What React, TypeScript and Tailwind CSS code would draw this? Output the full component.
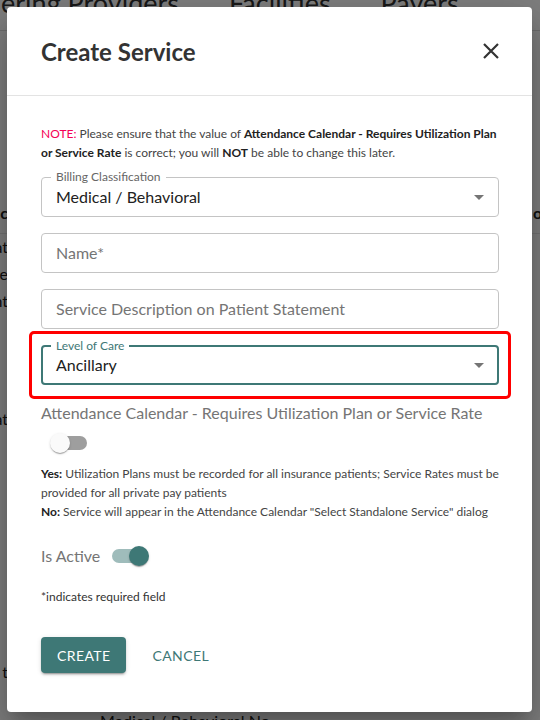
import { ReactNode } from 'react'

function Switch({ on }: { on?: boolean }) {
  return (
    <span className="relative inline-block w-[58px] h-[38px] shrink-0">
      <span
        className={
          on
            ? 'block m-[12px] w-[34px] h-[14px] rounded-full bg-[#9fbcbb]'
            : 'block m-[12px] w-[34px] h-[14px] rounded-full bg-[#9e9e9e]'
        }
      />
      <span
        className={
          on
            ? 'absolute top-[9px] left-[29px] w-[20px] h-[20px] rounded-full bg-[#3e7876] shadow-[0_2px_1px_-1px_rgba(0,0,0,0.2),0_1px_1px_0_rgba(0,0,0,0.14),0_1px_3px_0_rgba(0,0,0,0.12)]'
            : 'absolute top-[9px] left-[9px] w-[20px] h-[20px] rounded-full bg-[#fafafa] shadow-[0_2px_1px_-1px_rgba(0,0,0,0.2),0_1px_1px_0_rgba(0,0,0,0.14),0_1px_3px_0_rgba(0,0,0,0.12)]'
        }
      />
    </span>
  )
}

function Arrow() {
  return (
    <svg width="24" height="24" viewBox="0 0 24 24" className="text-[#757575]">
      <path d="M7 10l5 5 5-5z" fill="currentColor" />
    </svg>
  )
}

type FieldProps = {
  label?: string
  value?: string
  placeholder?: string
  select?: boolean
  focused?: boolean
}
function Field({ label, value, placeholder, select, focused }: FieldProps) {
  const box = focused
    ? 'relative h-[40px] rounded-[4px] border-2 border-[#3e7876] flex items-center justify-between pl-[13px] pr-[6px]'
    : 'relative h-[40px] rounded-[4px] border border-[#c4c4c4] flex items-center justify-between pl-[14px] pr-[7px]'
  return (
    <div className={box}>
      {label && (
        <span
          className={
            focused
              ? 'absolute -top-[9px] left-[8px] px-[5px] bg-white text-[12px] leading-[16px] text-[#3e7876]'
              : 'absolute -top-[9px] left-[9px] px-[5px] bg-white text-[12px] leading-[16px] text-[#666]'
          }
        >
          {label}
        </span>
      )}
      {value ? (
        <span className="text-[16px] text-[#212121]">{value}</span>
      ) : (
        <span className="text-[16px] text-[#757575]">{placeholder}</span>
      )}
      {select && <Arrow />}
    </div>
  )
}

function Clip({ children, bold }: { children: ReactNode; bold?: boolean }) {
  return (
    <div className="w-[8px] overflow-hidden flex justify-end">
      <span className={bold ? 'whitespace-nowrap font-bold' : 'whitespace-nowrap'}>
        {children}
      </span>
    </div>
  )
}

function Background() {
  return (
    <div className="w-[540px] h-[720px] bg-white text-[#212121] text-[16px] leading-[24px] flex flex-col">
      <div className="h-[31px] shrink-0 border-b border-[#ddd] flex items-start gap-[50px] text-[27px] leading-[34px] text-[#333]">
        <div className="w-[179px] -mt-[14px] overflow-hidden flex justify-end">
          <span className="whitespace-nowrap">Rendering Providers</span>
        </div>
        <span className="-mt-[14px]">Facilities</span>
        <span className="-mt-[14px]">Payers</span>
      </div>
      <div className="mt-[171px] h-[22px] shrink-0 flex items-center justify-between">
        <Clip bold>Servic</Clip>
        <span className="font-bold whitespace-nowrap w-[8px] overflow-hidden -mr-[1px]">or</span>
      </div>
      <div className="mt-[9px] h-[27px] shrink-0 flex items-center border-t border-[#e6e6e6]">
        <Clip>Formulat</Clip>
      </div>
      <div className="h-[27px] shrink-0 flex items-center">
        <Clip>Therapre</Clip>
      </div>
      <div className="h-[27px] shrink-0 flex items-center">
        <Clip>Treatment</Clip>
      </div>
      <div className="mt-[91px] h-[27px] shrink-0 flex items-center">
        <Clip>Evaluat</Clip>
      </div>
      <div className="mt-[226px] h-[27px] shrink-0 flex items-center">
        <Clip>Session t</Clip>
      </div>
      <div className="mt-[24px] shrink-0 pl-[100px] whitespace-nowrap">Medical / Behavioral No</div>
    </div>
  )
}

export default function App() {
  return (
    <div className="relative w-[540px] h-[720px] overflow-hidden font-['Lato','Open_Sans',sans-serif]">
      <Background />
      <div className="absolute inset-0 bg-black/50" />
      <div className="absolute left-[7px] top-[7px] w-[525px] h-[705px] bg-white rounded-[4px] shadow-[0_11px_15px_-7px_rgba(0,0,0,0.2),0_24px_38px_3px_rgba(0,0,0,0.14),0_9px_46px_8px_rgba(0,0,0,0.12)] flex flex-col">
        <div className="h-[89px] shrink-0 pl-[34px] pr-[33px] flex items-center justify-between border-b border-[#e3e3e3]">
          <h1 className="text-[24px] font-bold text-[#333] leading-[30px] mt-[1px]">Create Service</h1>
          <svg width="16" height="16" viewBox="0 0 16 16" className="text-[#333] -mt-[1px]">
            <path d="M1 1L15 15M15 1L1 15" stroke="currentColor" strokeWidth="2.2" />
          </svg>
        </div>
        <div className="pl-[34px] pr-[33px] pt-[28px] flex flex-col">
          <p className="text-[12px] leading-[19px] text-[#444]">
            <span className="text-[#f50057]">NOTE:</span> Please ensure that the value of{' '}
            <b className="text-[#222]">Attendance Calendar - Requires Utilization Plan</b>
            <br />
            <b className="text-[#222]">or Service Rate</b> is correct; you will{' '}
            <b className="text-[#222]">NOT</b> be able to change this later.
          </p>
          <div className="mt-[15px] flex flex-col gap-[16px]">
            <Field label="Billing Classification" value="Medical / Behavioral" select />
            <Field placeholder="Name*" />
            <Field placeholder="Service Description on Patient Statement" />
          </div>
          <div className="mt-[2px] -mx-[12px] px-[9px] py-[11px] border-[3px] border-[#ff0000] rounded-[5px]">
            <Field label="Level of Care" value="Ancillary" select focused />
          </div>
          <div className="mt-[4px] text-[16px] leading-[19px] text-[#757575]">
            Attendance Calendar - Requires Utilization Plan or Service Rate
          </div>
          <div className="mt-[2px] flex">
            <Switch />
          </div>
          <p className="mt-[2px] text-[12px] leading-[19px] text-[#444]">
            <b className="text-[#222]">Yes:</b> Utilization Plans must be recorded for all insurance patients; Service Rates must be
            <br />
            provided for all private pay patients
            <br />
            <b className="text-[#222]">No:</b> Service will appear in the Attendance Calendar "Select Standalone Service" dialog
          </p>
          <div className="mt-[16px] flex items-center">
            <span className="text-[16px] text-[#757575]">Is Active</span>
            <Switch on />
          </div>
          <p className="mt-[12px] text-[12px] leading-[19px] text-[#333]">*indicates required field</p>
          <div className="mt-[31px] flex items-center">
            <button className="h-[36px] px-[16px] rounded-[4px] bg-[#3e7876] text-white text-[14px] tracking-[0.4px] shadow-[0_3px_1px_-2px_rgba(0,0,0,0.2),0_2px_2px_0_rgba(0,0,0,0.14),0_1px_5px_0_rgba(0,0,0,0.12)]">
              CREATE
            </button>
            <button className="ml-[18px] h-[36px] px-[8px] text-[#3e7876] text-[14px] tracking-[0.4px]">
              CANCEL
            </button>
          </div>
        </div>
      </div>
    </div>
  )
}
